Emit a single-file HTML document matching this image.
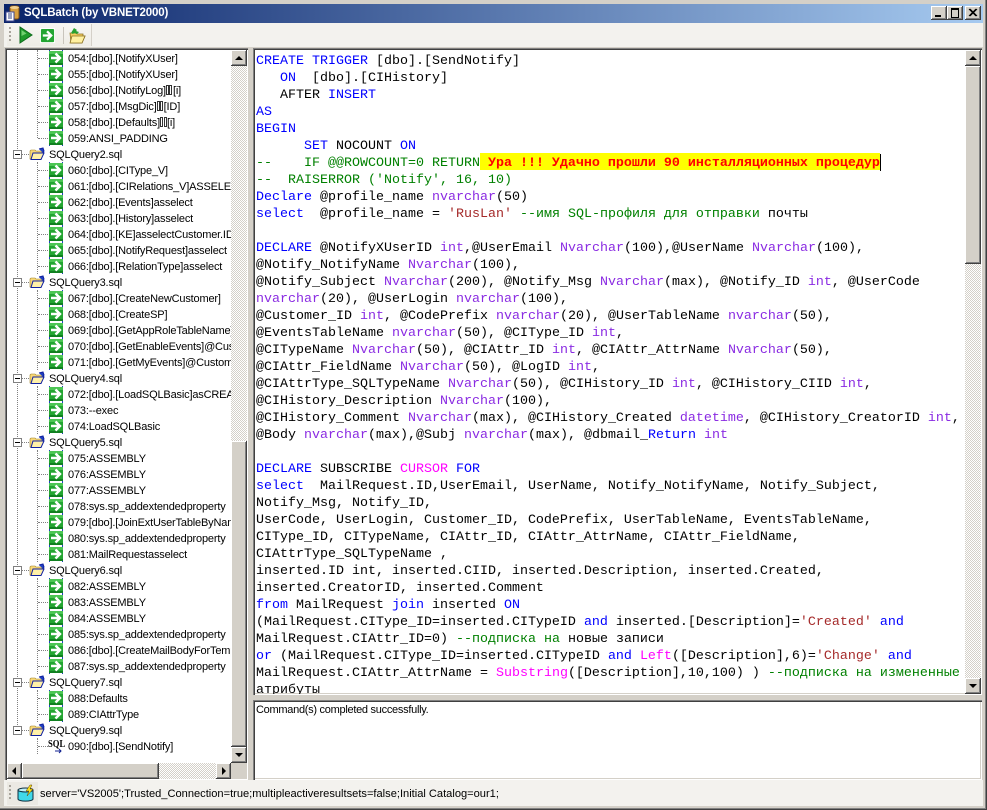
<!DOCTYPE html>
<html><head><meta charset="utf-8"><title>SQLBatch</title>
<style>
html,body{margin:0;padding:0;width:987px;height:810px;overflow:hidden;background:#d4d0c8}
.a{position:absolute}
#title{left:4px;top:4px;width:979px;height:19px;background:linear-gradient(90deg,#0a246a,#a6caf0)}
#ttext{left:24px;top:5px;font:bold 11.5px/16px "Liberation Sans",sans-serif;letter-spacing:-.15px;color:#fff;white-space:nowrap}
.wb{width:16px;height:14px;top:6px;background:#d4d0c8;box-shadow:inset -1px -1px #404040,inset 1px 1px #fff,inset -2px -2px #808080}
#tb{left:4px;top:23px;width:979px;height:24px;background:#f3f2ee}
#band{left:7px;top:24px;width:84px;height:22px;background:linear-gradient(#f7f6f3,#eeece6);border-right:1px solid #d4d0c8}
.panel{background:#fff;box-shadow:inset 1px 1px #808080,inset 2px 2px #404040,inset -1px -1px #fff,inset -2px -2px #d4d0c8}
.btn{background:#d4d0c8;box-shadow:inset -1px -1px #404040,inset 1px 1px #fff,inset -2px -2px #808080}
.dither{background:repeating-conic-gradient(#d4d0c8 0 25%,#fff 0 50%) 0 0/2px 2px}
.u,.d,.l,.r2{position:absolute;width:0;height:0}
.u{left:4px;top:6px;border:4px solid transparent;border-top:0;border-bottom:4px solid #000}
.d{left:4px;top:6px;border:4px solid transparent;border-bottom:0;border-top:4px solid #000}
.l{left:5px;top:4px;border:4px solid transparent;border-left:0;border-right:4px solid #000}
.r2{left:6px;top:4px;border:4px solid transparent;border-right:0;border-left:4px solid #000}
#tree{left:7px;top:50px;width:224px;height:713px;overflow:hidden;background:#fff}
.v{position:absolute;width:0;border-left:1px dotted #808080}
.i,.g{position:absolute;left:0;height:16px;width:224px;font:11px/16px "Liberation Sans",sans-serif;letter-spacing:-.17px;color:#000;white-space:nowrap}
.i svg{position:absolute;left:41px;top:0;width:16px;height:16px}
.i span{position:absolute;left:61px;top:1px}
.i:before{content:"";position:absolute;left:31px;top:8px;width:10px;border-top:1px dotted #808080}
.g span{position:absolute;left:42px;top:1px}
.g svg{position:absolute;left:22px;top:0;width:16px;height:16px}
.g b{position:absolute;left:6px;top:4px;width:7px;height:7px;border:1px solid #808080;background:#fff}
.g b:after{content:"";position:absolute;left:1px;top:3px;width:5px;height:1px;background:#000}
.g:before{content:"";position:absolute;left:15px;top:8px;width:7px;border-top:1px dotted #808080}
u{display:inline-block;width:1px;height:8px;border:1px solid #333;margin-right:.5px;vertical-align:-1px;text-decoration:none}
#code{left:256px;top:53px;width:708px;height:641px;overflow:hidden;margin:0;font:13.33px/17px "Liberation Mono",monospace;color:#000;white-space:pre}
.k{color:#00f}.t{color:#8a2be2}.s{color:#a52a2a}.c{color:#008000}.f{color:#f0f}
.h{color:#f00;font-weight:bold}
#out{left:256px;top:702px;font:11px/16px "Liberation Sans",sans-serif;letter-spacing:-.28px;color:#000;white-space:nowrap}
#status{left:4px;top:780px;width:979px;height:26px;background:#f3f2ee}
#sband{left:7px;top:782px;width:31px;height:23px;background:#ebe9e3}
#stext{left:40px;top:786px;font:11.1px/16px "Liberation Sans",sans-serif;color:#000;white-space:nowrap}
</style></head><body>
<svg width="0" height="0" style="position:absolute"><defs>
<symbol id="ar" viewBox="0 0 16 16"><rect x="1" y="1" width="14" height="14" rx="1" fill="#23a532"/><rect x="1" y="1" width="14" height="3" fill="#4cc654"/><rect x="1" y="13" width="14" height="2" fill="#108020"/><path d="M3 8h8M7.500 3.500L12 8l-4.500 4.500" fill="none" stroke="#fff" stroke-width="2.400"/><path d="M1 0h1v1H1zM14 0h1v1h-1zM1 15h1v1H1zM14 15h1v1h-1z" fill="#2040c0"/></symbol>
<symbol id="ta" viewBox="0 0 16 16"><rect width="16" height="16" fill="#fff"/><rect x="1" y="1" width="14" height="14" rx="1" fill="#23a532"/><path d="M3 8h8M7.500 3.500L12 8l-4.500 4.500" fill="none" stroke="#fff" stroke-width="2.400"/></symbol>
<symbol id="fo" viewBox="0 0 16 16"><path d="M1 5l1-1h4l1 1h6v2H5L3 13H1z" fill="#f8d878" stroke="#a08020" stroke-width=".6"/><path d="M4 7h11l-3 6.500H2z" fill="#fff0a8" stroke="#1020a0" stroke-width="1"/><path d="M10 3l4-1 1 3-1 2" fill="#2040c0" stroke="#1020a0"/></symbol>
</defs></svg>

<div class="a" style="left:0;top:0;width:987px;height:1px;background:#d4d0c8"></div>
<div class="a" style="left:985px;top:0;width:1px;height:810px;background:#808080"></div>
<div class="a" style="left:0;top:808px;width:987px;height:1px;background:#808080"></div>
<div class="a" style="left:0;top:809px;width:987px;height:1px;background:#404040"></div>
<div class="a" style="left:986px;top:0;width:1px;height:810px;background:#404040"></div>

<div class="a" id="title"></div>
<svg class="a" style="left:5px;top:5px" width="16" height="17" viewBox="0 0 16 17"><rect x="5" y="1" width="9" height="13" rx="2" fill="#d8a040" stroke="#805010"/><ellipse cx="9.500" cy="2.500" rx="4.500" ry="1.500" fill="#f0d090"/><rect x="1" y="7" width="8" height="9" fill="#fff" stroke="#404890"/><path d="M3 9h4M3 11h4M3 13h4" stroke="#304080"/></svg>
<div class="a" id="ttext">SQLBatch (by VBNET2000)</div>
<div class="a wb" style="left:931px"><div class="a" style="left:4px;top:9px;width:6px;height:2px;background:#000"></div></div>
<div class="a wb" style="left:947px"><div class="a" style="left:4px;top:2px;width:6px;height:7px;border:1px solid #000;border-top-width:2px"></div></div>
<svg class="a wb" style="left:965px" width="16" height="14" viewBox="0 0 16 14"><path d="M4 3l7 7M5 3l7 7M11 3l-7 7M12 3l-7 7" stroke="#000" stroke-width="1" fill="none"/></svg>

<div class="a" id="tb"></div>
<div class="a" id="band"></div>
<div class="a" style="left:9px;top:27px;width:2px;height:16px;background:repeating-linear-gradient(#a8a49c 0 2px,transparent 2px 4px)"></div>
<svg class="a" style="left:18px;top:26px" width="16" height="18" viewBox="0 0 16 18"><path d="M2 1l12 8-12 8z" fill="#1f9a2c" stroke="#0d6a1c"/><path d="M3.500 4v6l5-2.500z" fill="#70d070"/></svg>
<svg class="a" style="left:40px;top:28px" width="15" height="15"><use href="#ta"/></svg>
<div class="a" style="left:63px;top:27px;width:1px;height:17px;background:#c8c4bc"></div>
<svg class="a" style="left:69px;top:26px" width="18" height="18" viewBox="0 0 18 18"><path d="M1 7h6l1 1h6v2l2 0-3 7H2z" fill="#f6cf60" stroke="#8a7020" stroke-width=".8"/><path d="M3 10h13l-3 7H1z" fill="#fff0a0" stroke="#8a7020" stroke-width=".8"/><path d="M2 7l3-5 3 2-1 1 3 1-2 2-3-1-1 1z" fill="#28a030"/></svg>

<!-- Tree panel -->
<div class="a panel" style="left:5px;top:48px;width:243px;height:732px"></div>
<div class="a" id="tree">
<div class="v" style="left:10px;top:0;height:681px"></div>
<div class="v" style="left:30px;top:0;height:88px"></div>
<div class="v" style="left:30px;top:112px;height:112px"></div>
<div class="v" style="left:30px;top:240px;height:80px"></div>
<div class="v" style="left:30px;top:336px;height:48px"></div>
<div class="v" style="left:30px;top:400px;height:112px"></div>
<div class="v" style="left:30px;top:528px;height:96px"></div>
<div class="v" style="left:30px;top:640px;height:32px"></div>
<div class="v" style="left:30px;top:688px;height:16px"></div>
<div class="i" style="top:0"><svg><use href="#ar"/></svg><span>054:[dbo].[NotifyXUser]</span></div>
<div class="i" style="top:16px"><svg><use href="#ar"/></svg><span>055:[dbo].[NotifyXUser]</span></div>
<div class="i" style="top:32px"><svg><use href="#ar"/></svg><span>056:[dbo].[NotifyLog]<u></u><u></u>[i]</span></div>
<div class="i" style="top:48px"><svg><use href="#ar"/></svg><span>057:[dbo].[MsgDic]<u></u><u></u>[ID]</span></div>
<div class="i" style="top:64px"><svg><use href="#ar"/></svg><span>058:[dbo].[Defaults]<u></u><u></u>[i]</span></div>
<div class="i" style="top:80px"><svg><use href="#ar"/></svg><span>059:ANSI_PADDING</span></div>
<div class="g" style="top:96px"><b></b><svg><use href="#fo"/></svg><span>SQLQuery2.sql</span></div>
<div class="i" style="top:112px"><svg><use href="#ar"/></svg><span>060:[dbo].[CIType_V]</span></div>
<div class="i" style="top:128px"><svg><use href="#ar"/></svg><span>061:[dbo].[CIRelations_V]ASSELECT</span></div>
<div class="i" style="top:144px"><svg><use href="#ar"/></svg><span>062:[dbo].[Events]asselect</span></div>
<div class="i" style="top:160px"><svg><use href="#ar"/></svg><span>063:[dbo].[History]asselect</span></div>
<div class="i" style="top:176px"><svg><use href="#ar"/></svg><span>064:[dbo].[KE]asselectCustomer.ID</span></div>
<div class="i" style="top:192px"><svg><use href="#ar"/></svg><span>065:[dbo].[NotifyRequest]asselect</span></div>
<div class="i" style="top:208px"><svg><use href="#ar"/></svg><span>066:[dbo].[RelationType]asselect</span></div>
<div class="g" style="top:224px"><b></b><svg><use href="#fo"/></svg><span>SQLQuery3.sql</span></div>
<div class="i" style="top:240px"><svg><use href="#ar"/></svg><span>067:[dbo].[CreateNewCustomer]</span></div>
<div class="i" style="top:256px"><svg><use href="#ar"/></svg><span>068:[dbo].[CreateSP]</span></div>
<div class="i" style="top:272px"><svg><use href="#ar"/></svg><span>069:[dbo].[GetAppRoleTableName]</span></div>
<div class="i" style="top:288px"><svg><use href="#ar"/></svg><span>070:[dbo].[GetEnableEvents]@Custom</span></div>
<div class="i" style="top:304px"><svg><use href="#ar"/></svg><span>071:[dbo].[GetMyEvents]@Custom</span></div>
<div class="g" style="top:320px"><b></b><svg><use href="#fo"/></svg><span>SQLQuery4.sql</span></div>
<div class="i" style="top:336px"><svg><use href="#ar"/></svg><span>072:[dbo].[LoadSQLBasic]asCREATE</span></div>
<div class="i" style="top:352px"><svg><use href="#ar"/></svg><span>073:--exec</span></div>
<div class="i" style="top:368px"><svg><use href="#ar"/></svg><span>074:LoadSQLBasic</span></div>
<div class="g" style="top:384px"><b></b><svg><use href="#fo"/></svg><span>SQLQuery5.sql</span></div>
<div class="i" style="top:400px"><svg><use href="#ar"/></svg><span>075:ASSEMBLY</span></div>
<div class="i" style="top:416px"><svg><use href="#ar"/></svg><span>076:ASSEMBLY</span></div>
<div class="i" style="top:432px"><svg><use href="#ar"/></svg><span>077:ASSEMBLY</span></div>
<div class="i" style="top:448px"><svg><use href="#ar"/></svg><span>078:sys.sp_addextendedproperty</span></div>
<div class="i" style="top:464px"><svg><use href="#ar"/></svg><span>079:[dbo].[JoinExtUserTableByName]</span></div>
<div class="i" style="top:480px"><svg><use href="#ar"/></svg><span>080:sys.sp_addextendedproperty</span></div>
<div class="i" style="top:496px"><svg><use href="#ar"/></svg><span>081:MailRequestasselect</span></div>
<div class="g" style="top:512px"><b></b><svg><use href="#fo"/></svg><span>SQLQuery6.sql</span></div>
<div class="i" style="top:528px"><svg><use href="#ar"/></svg><span>082:ASSEMBLY</span></div>
<div class="i" style="top:544px"><svg><use href="#ar"/></svg><span>083:ASSEMBLY</span></div>
<div class="i" style="top:560px"><svg><use href="#ar"/></svg><span>084:ASSEMBLY</span></div>
<div class="i" style="top:576px"><svg><use href="#ar"/></svg><span>085:sys.sp_addextendedproperty</span></div>
<div class="i" style="top:592px"><svg><use href="#ar"/></svg><span>086:[dbo].[CreateMailBodyForTemplate]</span></div>
<div class="i" style="top:608px"><svg><use href="#ar"/></svg><span>087:sys.sp_addextendedproperty</span></div>
<div class="g" style="top:624px"><b></b><svg><use href="#fo"/></svg><span>SQLQuery7.sql</span></div>
<div class="i" style="top:640px"><svg><use href="#ar"/></svg><span>088:Defaults</span></div>
<div class="i" style="top:656px"><svg><use href="#ar"/></svg><span>089:CIAttrType</span></div>
<div class="g" style="top:672px"><b></b><svg><use href="#fo"/></svg><span>SQLQuery9.sql</span></div>
<div class="i" style="top:688px"><span>090:[dbo].[SendNotify]</span><div class="a" style="left:41px;top:0;font:bold 11px/12px 'Liberation Serif',serif;letter-spacing:0;color:#000;transform:scaleX(.78);transform-origin:0 0">SQL</div><svg style="left:48px;top:10px;width:8px;height:6px" viewBox="0 0 8 6"><path d="M0 3h6M4 1l2 2-2 2" stroke="#102090" fill="none"/></svg></div>
</div>
<!-- Tree scrollbars -->
<div class="a dither" style="left:231px;top:50px;width:16px;height:713px"></div>
<div class="a btn" style="left:231px;top:50px;width:16px;height:16px"><i class="u"></i></div>
<div class="a btn" style="left:231px;top:441px;width:16px;height:306px"></div>
<div class="a btn" style="left:231px;top:747px;width:16px;height:16px"><i class="d"></i></div>
<div class="a dither" style="left:7px;top:763px;width:224px;height:16px"></div>
<div class="a btn" style="left:7px;top:763px;width:15px;height:16px"><i class="l"></i></div>
<div class="a btn" style="left:22px;top:763px;width:137px;height:16px"></div>
<div class="a btn" style="left:216px;top:763px;width:15px;height:16px"><i class="r2"></i></div>
<div class="a" style="left:231px;top:763px;width:16px;height:16px;background:#d4d0c8"></div>

<!-- Code panel -->
<div class="a panel" style="left:253px;top:48px;width:729px;height:647px"></div>
<div class="a" style="left:480px;top:153px;width:400px;height:17px;background:#ff0"></div>
<pre class="a" id="code"><span class="k">CREATE</span> <span class="k">TRIGGER</span> [dbo].[SendNotify]
   <span class="k">ON</span>  [dbo].[CIHistory]
   AFTER <span class="k">INSERT</span>
<span class="k">AS</span>
<span class="k">BEGIN</span>
      <span class="k">SET</span> NOCOUNT <span class="k">ON</span>
<span class="c">--    IF @@ROWCOUNT=0 RETURN</span><span class="h"> Ура !!! Удачно прошли 90 инсталляционных процедур</span>
<span class="c">--  RAISERROR ('Notify', 16, 10)</span>
<span class="k">Declare</span> @profile_name <span class="t">nvarchar</span>(50)
<span class="k">select</span>  @profile_name = <span class="s">'RusLan'</span> <span class="c">--имя SQL-профиля для отправки</span> почты

<span class="k">DECLARE</span> @NotifyXUserID <span class="t">int</span>,@UserEmail <span class="t">Nvarchar</span>(100),@UserName <span class="t">Nvarchar</span>(100),
@Notify_NotifyName <span class="t">Nvarchar</span>(100),
@Notify_Subject <span class="t">Nvarchar</span>(200), @Notify_Msg <span class="t">Nvarchar</span>(max), @Notify_ID <span class="t">int</span>, @UserCode
<span class="t">nvarchar</span>(20), @UserLogin <span class="t">nvarchar</span>(100),
@Customer_ID <span class="t">int</span>, @CodePrefix <span class="t">nvarchar</span>(20), @UserTableName <span class="t">nvarchar</span>(50),
@EventsTableName <span class="t">nvarchar</span>(50), @CIType_ID <span class="t">int</span>,
@CITypeName <span class="t">Nvarchar</span>(50), @CIAttr_ID <span class="t">int</span>, @CIAttr_AttrName <span class="t">Nvarchar</span>(50),
@CIAttr_FieldName <span class="t">Nvarchar</span>(50), @LogID <span class="t">int</span>,
@CIAttrType_SQLTypeName <span class="t">Nvarchar</span>(50), @CIHistory_ID <span class="t">int</span>, @CIHistory_CIID <span class="t">int</span>,
@CIHistory_Description <span class="t">Nvarchar</span>(100),
@CIHistory_Comment <span class="t">Nvarchar</span>(max), @CIHistory_Created <span class="t">datetime</span>, @CIHistory_CreatorID <span class="t">int</span>,
@Body <span class="t">nvarchar</span>(max),@Subj <span class="t">nvarchar</span>(max), @dbmail_<span class="k">Return</span> <span class="t">int</span>

<span class="k">DECLARE</span> SUBSCRIBE <span class="f">CURSOR</span> <span class="k">FOR</span>
<span class="k">select</span>  MailRequest.ID,UserEmail, UserName, Notify_NotifyName, Notify_Subject,
Notify_Msg, Notify_ID,
UserCode, UserLogin, Customer_ID, CodePrefix, UserTableName, EventsTableName,
CIType_ID, CITypeName, CIAttr_ID, CIAttr_AttrName, CIAttr_FieldName,
CIAttrType_SQLTypeName ,
inserted.ID int, inserted.CIID, inserted.Description, inserted.Created,
inserted.CreatorID, inserted.Comment
<span class="k">from</span> MailRequest <span class="k">join</span> inserted <span class="k">ON</span>
(MailRequest.CIType_ID=inserted.CITypeID <span class="k">and</span> inserted.[Description]=<span class="s">'Created'</span> <span class="k">and</span>
MailRequest.CIAttr_ID=0) <span class="c">--подписка на</span> новые записи
<span class="k">or</span> (MailRequest.CIType_ID=inserted.CITypeID <span class="k">and</span> <span class="f">Left</span>([Description],6)=<span class="s">'Change'</span> <span class="k">and</span>
MailRequest.CIAttr_AttrName = <span class="f">Substring</span>([Description],10,100) ) <span class="c">--подписка на измененные</span>
атрибуты</pre>
<div class="a" style="left:880px;top:154px;width:1px;height:17px;background:#000"></div>
<div class="a dither" style="left:965px;top:50px;width:16px;height:644px"></div>
<div class="a btn" style="left:965px;top:50px;width:16px;height:16px"><i class="u"></i></div>
<div class="a btn" style="left:965px;top:66px;width:16px;height:198px"></div>
<div class="a btn" style="left:965px;top:678px;width:16px;height:16px"><i class="d"></i></div>

<!-- Output -->
<div class="a panel" style="left:253px;top:700px;width:729px;height:80px"></div>
<div class="a" id="out">Command(s) completed successfully.</div>

<!-- Status -->
<div class="a" id="status"></div>
<div class="a" id="sband"></div>
<div class="a" style="left:9px;top:785px;width:2px;height:16px;background:repeating-linear-gradient(#a8a49c 0 2px,transparent 2px 4px)"></div>
<svg class="a" style="left:17px;top:784px" width="18" height="18" viewBox="0 0 18 18"><path d="M1 6h15v9a7 2 0 0 1-15 0z" fill="#40d8e8" stroke="#103040"/><ellipse cx="8.500" cy="6" rx="7.500" ry="2" fill="#c0f0f8" stroke="#103040"/><path d="M13 1l-4 6h3l-2 5 6-7h-3l2-4z" fill="#f8e020" stroke="#604000" stroke-width=".5"/></svg>
<div class="a" id="stext">server='VS2005';Trusted_Connection=true;multipleactiveresultsets=false;Initial Catalog=our1;</div>
</body></html>
